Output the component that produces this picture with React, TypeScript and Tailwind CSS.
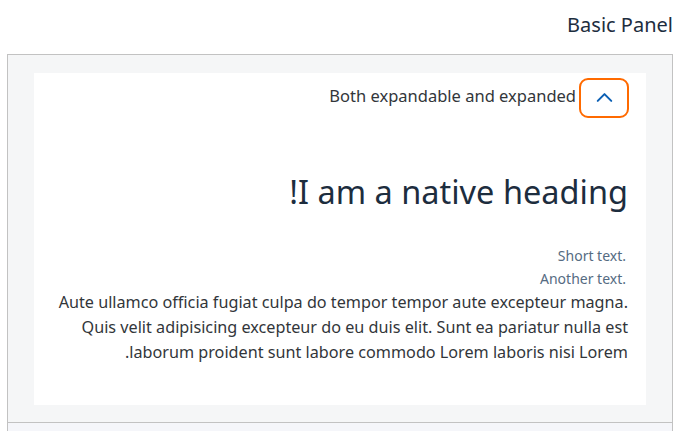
import { ChevronUp } from "lucide-react";

export default function App() {
  return (
    <div dir="rtl" className="w-[683px] h-[431px] overflow-hidden bg-white font-['Noto_Sans',sans-serif] text-[#32363a]">
      {/* TITLE */}
      <div className="h-[54px] pr-[10px] pt-[11px]">
        <h1 className="text-[20px] leading-[28px] text-[#1d2d3e]">Basic Panel</h1>
      </div>

      {/* PANEL */}
      <div className="mx-[7px] mr-[10px] border border-[#c2c2c2] bg-[#f5f6f7]">
        <div className="px-[26px] pt-[18px] pb-[17px]">
          <div className="bg-white">
            {/* HEADER */}
            <div className="flex items-center pt-[5px] pr-[17px]">
              <button className="flex h-[40px] w-[50px] items-center justify-center rounded-[9px] border-2 border-[#ff6a00] text-[#0a5fb4]">
                <ChevronUp size={27} strokeWidth={1.8} className="-mt-[2px]" />
              </button>
              <span className="mr-[3px] -mt-[3px] text-[16.5px] text-[#32363a]">Both expandable and expanded</span>
            </div>

            {/* CONTENT */}
            <div className="pr-[18px] pl-[20px] pt-[55px] pb-[40px]">
              <h2 className="text-[32.5px] leading-[38px] text-[#1d2d3e]">I am a native heading!</h2>
              <div className="mt-[33px] text-[14px] leading-[23px] text-[#556b82]">
                <div dir="ltr" className="text-right pr-[2px]">Short text.</div>
                <div dir="ltr" className="text-right pr-[2px]">Another text.</div>
              </div>
              <p className="text-[16.2px] leading-[25px] text-[#32363a]">
                Aute ullamco officia fugiat culpa do tempor tempor aute excepteur magna. Quis velit adipisicing
                excepteur do eu duis elit. Sunt ea pariatur nulla est laborum proident sunt labore commodo Lorem
                laboris nisi Lorem.
              </p>
            </div>
          </div>
        </div>
        <div className="h-[20px] border-t border-[#c2c2c2] bg-[#f5f6fa]"></div>
      </div>
    </div>
  );
}
